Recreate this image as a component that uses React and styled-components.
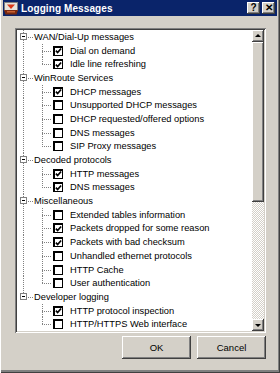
import React from 'react'
import styled, { createGlobalStyle } from 'styled-components'

const GlobalStyle = createGlobalStyle`
  html, body {
    margin: 0;
    padding: 0;
    background: #d4d0c8;
  }
  body {
    font-family: "Liberation Sans", Arial, sans-serif;
  }
`

const groups = [
  {
    title: 'WAN/Dial-Up messages',
    items: [
      ['Dial on demand', true],
      ['Idle line refreshing', true],
    ],
  },
  {
    title: 'WinRoute Services',
    items: [
      ['DHCP messages', true],
      ['Unsupported DHCP messages', false],
      ['DHCP requested/offered options', false],
      ['DNS messages', false],
      ['SIP Proxy messages', false],
    ],
  },
  {
    title: 'Decoded protocols',
    items: [
      ['HTTP messages', true],
      ['DNS messages', true],
    ],
  },
  {
    title: 'Miscellaneous',
    items: [
      ['Extended tables information', false],
      ['Packets dropped for some reason', true],
      ['Packets with bad checksum', true],
      ['Unhandled ethernet protocols', false],
      ['HTTP Cache', false],
      ['User authentication', false],
    ],
  },
  {
    title: 'Developer logging',
    items: [
      ['HTTP protocol inspection', true],
      ['HTTP/HTTPS Web interface', false],
    ],
  },
]

const raised = `
  box-shadow: inset -1px -1px #404040, inset 1px 1px #ffffff,
    inset -2px -2px #808080, inset 2px 2px #d4d0c8;
`

const dotsV = 'repeating-linear-gradient(to bottom, #808080 0 1px, transparent 1px 2px)'
const dotsH = 'repeating-linear-gradient(to right, #808080 0 1px, transparent 1px 2px)'

const AppIcon = () => (
  <svg width="14" height="13" viewBox="0 0 14 13">
    <rect x="0.5" y="0.5" width="13" height="8" fill="#e8e4dc" stroke="#808080" />
    <path d="M3 2.5 L7 7 L11 2.5 Z" fill="#d83818" />
    <path d="M0 8 H14 L12.5 12.5 H1.5 Z" fill="#7a2a10" />
    <rect x="3" y="9" width="8" height="1.5" fill="#c86030" />
  </svg>
)

const Check = () => (
  <svg width="8" height="8" viewBox="0 0 8 8">
    <path d="M1 3.6 L3 5.8 L7 1.2" fill="none" stroke="#000" strokeWidth="1.9" />
  </svg>
)

export default function App() {
  return (
    <>
      <GlobalStyle />
      <Window>
        <TitleBar>
          <AppIcon />
          <Title>Logging Messages</Title>
          <CaptionButtons>
            <CaptionButton>?</CaptionButton>
            <CaptionButton>✕</CaptionButton>
          </CaptionButtons>
        </TitleBar>
        <Client>
          <ListBox>
            <Tree>
              {groups.map((group, gi) => {
                const lastGroup = gi === groups.length - 1
                return (
                  <React.Fragment key={group.title}>
                    <Row>
                      <Stem $mode={lastGroup ? 'top' : 'full'} $group>
                        <Expander />
                      </Stem>
                      <Label>{group.title}</Label>
                    </Row>
                    {group.items.map(([label, checked], ii) => (
                      <Row key={label + ii}>
                        <Stem $mode={lastGroup ? 'none' : 'full'} />
                        <Branch $last={ii === group.items.length - 1} />
                        <CheckBox>{checked && <Check />}</CheckBox>
                        <Label $child>{label}</Label>
                      </Row>
                    ))}
                  </React.Fragment>
                )
              })}
            </Tree>
            <ScrollBar>
              <ArrowButton>
                <Arrow $dir="up" />
              </ArrowButton>
              <Thumb />
              <Track />
              <ArrowButton>
                <Arrow $dir="down" />
              </ArrowButton>
            </ScrollBar>
          </ListBox>
          <Footer>
            <Button>OK</Button>
            <Button>Cancel</Button>
          </Footer>
        </Client>
      </Window>
    </>
  )
}

const Window = styled.div`
  width: 280px;
  height: 373px;
  box-sizing: border-box;
  padding: 0 3px 5px 3px;
  display: flex;
  flex-direction: column;
  background: #d4d0c8;
  box-shadow: inset 1px 0 #ffffff, inset -1px -1px #404040, inset -2px -2px #808080,
    inset 0 -3px #808080;
`

const TitleBar = styled.div`
  height: 16px;
  display: flex;
  align-items: center;
  padding: 0 2px 0 1px;
  background: #0a246a;
  color: #ffffff;
`

const Title = styled.span`
  margin-left: 3px;
  font-size: 10px;
  font-weight: bold;
  letter-spacing: 0.1px;
  flex: 1;
`

const CaptionButtons = styled.div`
  display: flex;
  gap: 2px;
`

const CaptionButton = styled.div`
  width: 13px;
  height: 12px;
  background: #d4d0c8;
  color: #000;
  font-size: 10px;
  font-weight: bold;
  line-height: 12px;
  text-align: center;
  ${raised}
`

const Client = styled.div`
  flex: 1;
  display: flex;
  flex-direction: column;
  padding: 12px 11px 0 12px;
`

const ListBox = styled.div`
  height: 305px;
  box-sizing: border-box;
  padding: 2px;
  display: flex;
  background: #ffffff;
  box-shadow: inset 1px 1px #808080, inset -1px -1px #ffffff, inset 2px 2px #404040,
    inset -2px -2px #d4d0c8;
`

const Tree = styled.div`
  flex: 1;
  overflow: hidden;
  display: flex;
  flex-direction: column;
`

const Row = styled.div`
  flex: none;
  height: 13.7px;
  display: flex;
  align-items: center;
`

const Stem = styled.div`
  flex: none;
  width: 16px;
  align-self: stretch;
  position: relative;
  display: flex;
  align-items: center;
  padding-left: 3px;
  box-sizing: border-box;

  &::before {
    content: '';
    display: ${(p) => (p.$mode === 'none' ? 'none' : 'block')};
    position: absolute;
    left: 6px;
    top: 0;
    width: 1px;
    height: ${(p) => (p.$mode === 'top' ? '50%' : '100%')};
    background: ${dotsV};
  }

  &::after {
    content: '';
    display: ${(p) => (p.$group ? 'block' : 'none')};
    position: absolute;
    left: 11px;
    top: 50%;
    width: 5px;
    height: 1px;
    background: ${dotsH};
  }
`

const Expander = styled.div`
  position: relative;
  z-index: 1;
  width: 7px;
  height: 7px;
  box-sizing: border-box;
  border: 1px solid #808080;
  background: #ffffff;
  margin-top: -1px;

  &::after {
    content: '';
    position: absolute;
    left: 1px;
    top: 2px;
    width: 3px;
    height: 1px;
    background: #000;
  }
`

const Branch = styled.div`
  flex: none;
  width: 20px;
  align-self: stretch;
  position: relative;

  &::before {
    content: '';
    position: absolute;
    left: 9px;
    top: 0;
    width: 1px;
    height: ${(p) => (p.$last ? '50%' : '100%')};
    background: ${dotsV};
  }

  &::after {
    content: '';
    position: absolute;
    left: 9px;
    top: 50%;
    width: 10px;
    height: 1px;
    background: ${dotsH};
  }
`

const CheckBox = styled.div`
  flex: none;
  width: 10px;
  height: 10px;
  box-sizing: border-box;
  border: 1px solid #000;
  border-top-width: 2px;
  border-left-width: 2px;
  background: #fff;
  display: flex;
  align-items: center;
  justify-content: center;
`

const Label = styled.span`
  margin-left: ${(p) => (p.$child ? '7px' : '1px')};
  font-size: 9.3px;
  color: #000;
  white-space: nowrap;
`

const ScrollBar = styled.div`
  flex: none;
  width: 12px;
  display: flex;
  flex-direction: column;
`

const ArrowButton = styled.div`
  flex: none;
  height: 12px;
  background: #d4d0c8;
  display: flex;
  align-items: center;
  justify-content: center;
  ${raised}
`

const Arrow = styled.div`
  width: 0;
  height: 0;
  border-left: 3px solid transparent;
  border-right: 3px solid transparent;
  ${(p) =>
    p.$dir === 'up'
      ? 'border-bottom: 3px solid #000; margin-top: -1px;'
      : 'border-top: 3px solid #000; margin-top: 1px;'}
`

const Thumb = styled.div`
  flex: none;
  height: 160px;
  background: #d4d0c8;
  ${raised}
`

const Track = styled.div`
  flex: 1;
  background: repeating-conic-gradient(#d4d0c8 0 25%, #ffffff 0 50%) 0 0 / 2px 2px;
`

const Footer = styled.div`
  display: flex;
  justify-content: flex-end;
  gap: 6px;
  margin-top: 3px;
`

const Button = styled.div`
  width: 69px;
  height: 23px;
  background: #d4d0c8;
  font-size: 9.5px;
  color: #000;
  display: flex;
  align-items: center;
  justify-content: center;
  ${raised}
`
